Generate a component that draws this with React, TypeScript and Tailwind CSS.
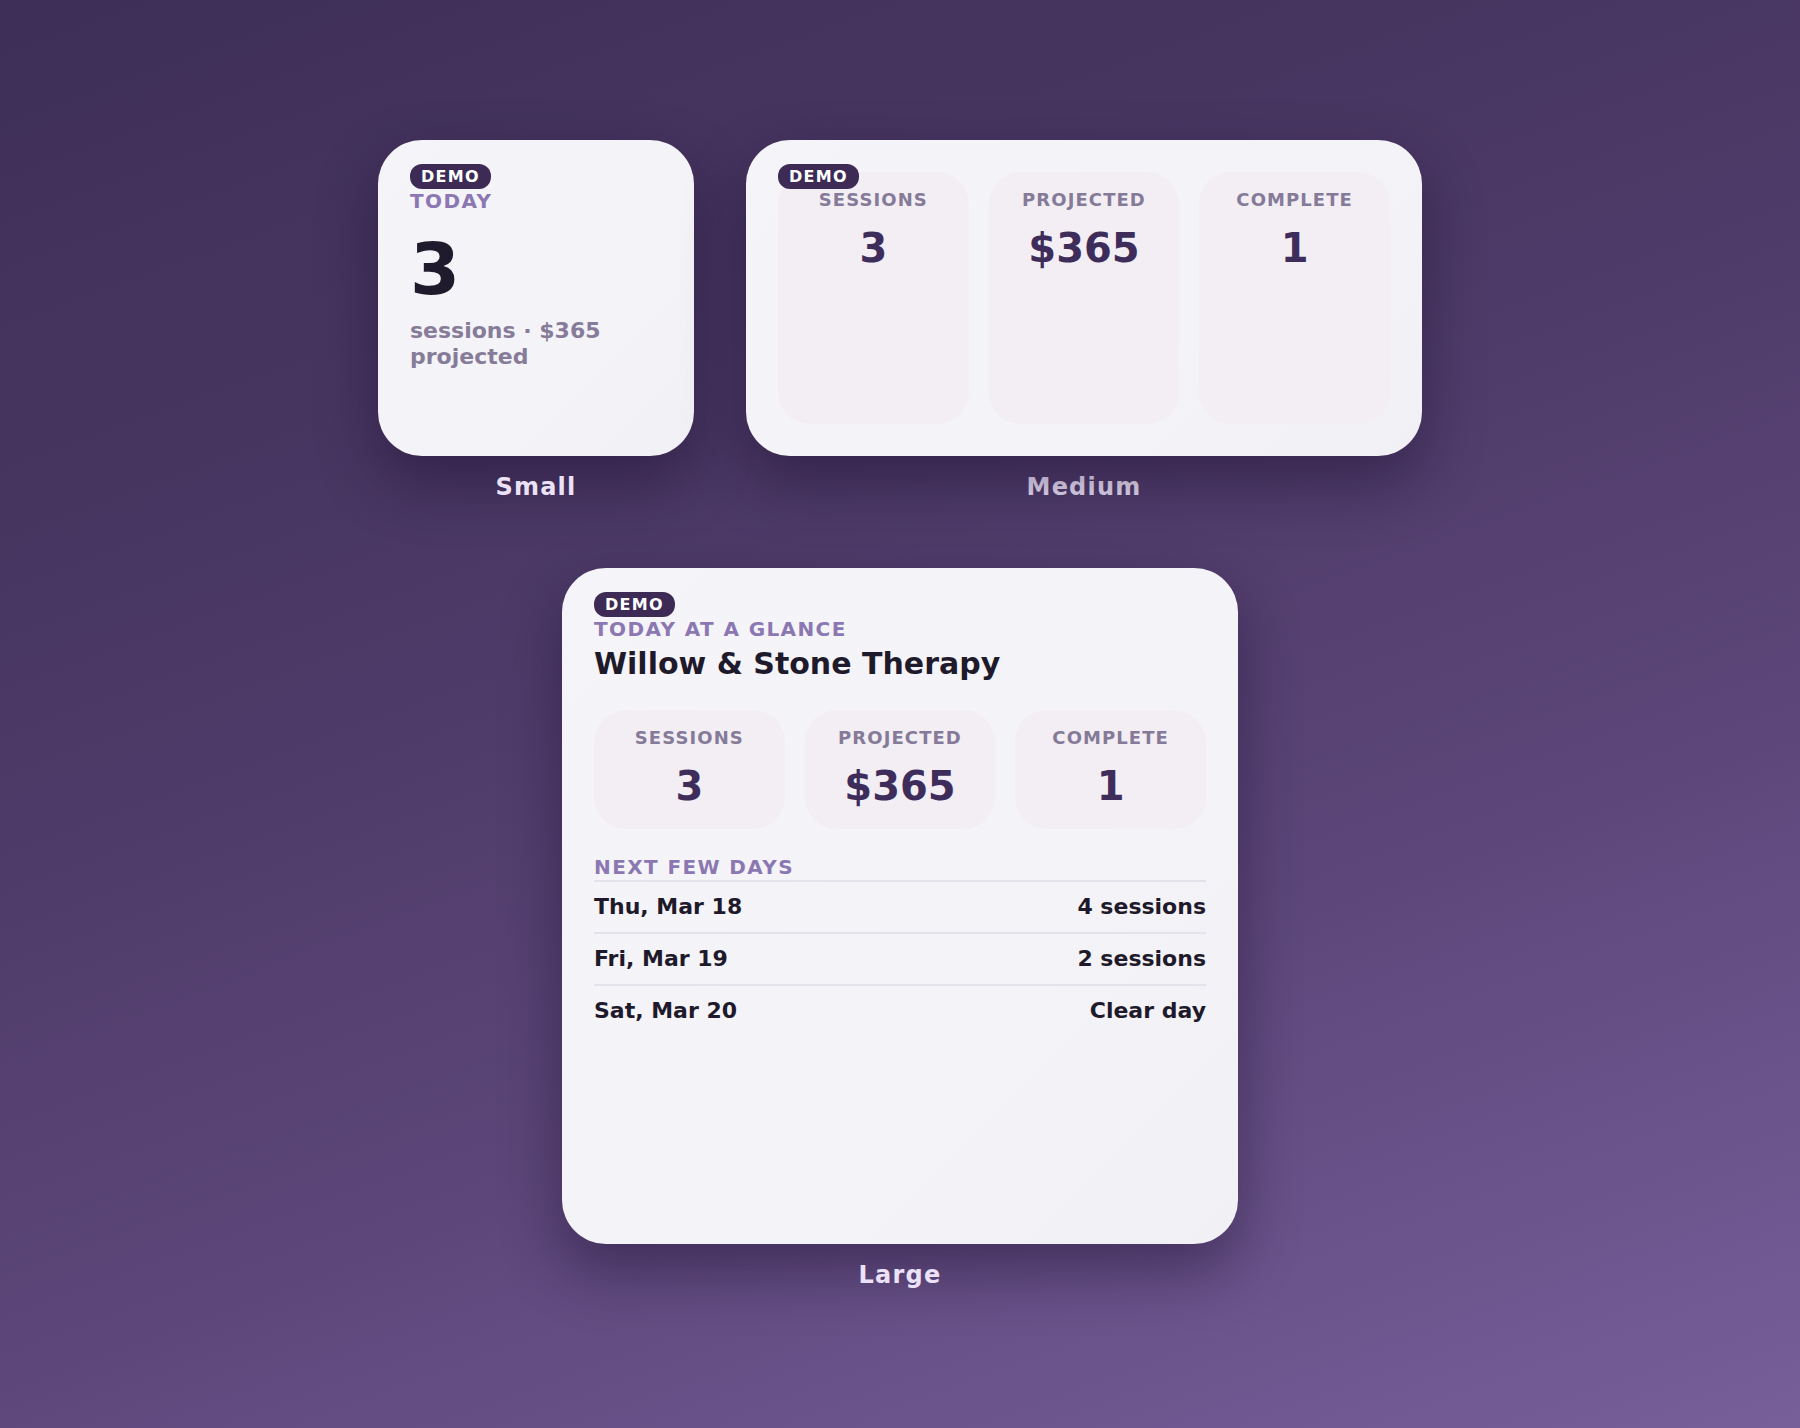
import React from "react";

const FONT = "font-['DejaVu_Sans','Liberation_Sans',sans-serif]";

function DemoBadge() {
  return (
    <div className="inline-flex h-[25px] items-center rounded-[12px] bg-[#3d2b56] px-[11px] text-[16px] font-bold leading-[25px] tracking-[0.08em] text-white">
      DEMO
    </div>
  );
}

type Stat = { label: string; value: string };

const stats: Stat[] = [
  { label: "SESSIONS", value: "3" },
  { label: "PROJECTED", value: "$365" },
  { label: "COMPLETE", value: "1" },
];

function StatTile({ stat, grow }: { stat: Stat; grow?: boolean }) {
  return (
    <div
      className={`flex flex-col items-center rounded-[32px] bg-[#f2eef4] pt-[17px] pb-[19px] ${
        grow ? "h-full" : ""
      }`}
    >
      <div className="text-[18px] font-bold leading-[22px] tracking-[0.06em] text-[#857b98]">
        {stat.label}
      </div>
      <div className="mt-[13px] text-[40px] font-bold leading-[48px] text-[#3e2d5b]">
        {stat.value}
      </div>
    </div>
  );
}

function WidgetLabel({ children }: { children: React.ReactNode }) {
  return (
    <div className="mt-[15px] text-[24px] font-bold leading-[32px] tracking-[0.05em] text-[#ebe2f8]">
      {children}
    </div>
  );
}

const cardBase =
  "rounded-[44px] bg-[linear-gradient(135deg,#f5f4f8_0%,#f4f3f7_60%,#f1f0f4_100%)] shadow-[0_26px_60px_rgba(24,12,44,0.45)]";

function SmallWidget() {
  return (
    <div className="flex flex-col items-center">
      <div className={`${cardBase} flex h-[316px] w-[316px] flex-col px-8 pt-6`}>
        <div>
          <DemoBadge />
        </div>
        <div className="text-[20px] font-bold leading-[24px] tracking-[0.07em] text-[#8b78b2]">
          TODAY
        </div>
        <div className="mt-[20px] text-[72px] font-bold leading-none text-[#1f1a2c]">3</div>
        <div className="mt-[13px] text-[22px] font-bold leading-[26px] text-[#867c9a]">
          sessions · $365 projected
        </div>
      </div>
      <WidgetLabel>Small</WidgetLabel>
    </div>
  );
}

function MediumWidget() {
  return (
    <div className="flex flex-col items-center">
      <div className={`${cardBase} relative h-[316px] w-[676px] p-8`}>
        <div className="grid h-full grid-cols-3 gap-5">
          {stats.map((s) => (
            <StatTile key={s.label} stat={s} grow />
          ))}
        </div>
        <div className="absolute left-8 top-6">
          <DemoBadge />
        </div>
      </div>
      <WidgetLabel>Medium</WidgetLabel>
    </div>
  );
}

const upcoming = [
  { day: "Thu, Mar 18", note: "4 sessions" },
  { day: "Fri, Mar 19", note: "2 sessions" },
  { day: "Sat, Mar 20", note: "Clear day" },
];

function LargeWidget() {
  return (
    <div className="flex flex-col items-center">
      <div className={`${cardBase} flex h-[676px] w-[676px] flex-col px-8 pt-6`}>
        <div>
          <DemoBadge />
        </div>
        <div className="text-[20px] font-bold leading-[24px] tracking-[0.07em] text-[#8b78b2]">
          TODAY AT A GLANCE
        </div>
        <div className="mt-[6px] text-[30px] font-bold leading-[34px] text-[#1e1a2b]">
          Willow &amp; Stone Therapy
        </div>
        <div className="mt-[29px] grid grid-cols-3 gap-5">
          {stats.map((s) => (
            <StatTile key={s.label} stat={s} />
          ))}
        </div>
        <div className="mt-[26px] border-b-2 border-[#e4e2ea] pb-[1px] text-[20px] font-bold leading-[24px] tracking-[0.07em] text-[#8b78b2]">
          NEXT FEW DAYS
        </div>
        <div className="flex flex-col">
          {upcoming.map((row, i) => (
            <div
              key={row.day}
              className={`flex items-center justify-between py-3 text-[22px] font-bold leading-[26px] text-[#1e1a2b] ${
                i > 0 ? "border-t-2 border-[#e4e2ea]" : ""
              }`}
            >
              <span>{row.day}</span>
              <span>{row.note}</span>
            </div>
          ))}
        </div>
      </div>
      <WidgetLabel>Large</WidgetLabel>
    </div>
  );
}

export default function App() {
  return (
    <div
      className={`${FONT} flex min-h-[1428px] w-full flex-col items-center bg-[linear-gradient(160deg,#3e2f57_0%,#4b3865_35%,#5c4679_65%,#775f9a_100%)] pt-[140px]`}
    >
      <div className="flex items-start gap-[52px]">
        <SmallWidget />
        <MediumWidget />
      </div>
      <div className="mt-[65px]">
        <LargeWidget />
      </div>
    </div>
  );
}
